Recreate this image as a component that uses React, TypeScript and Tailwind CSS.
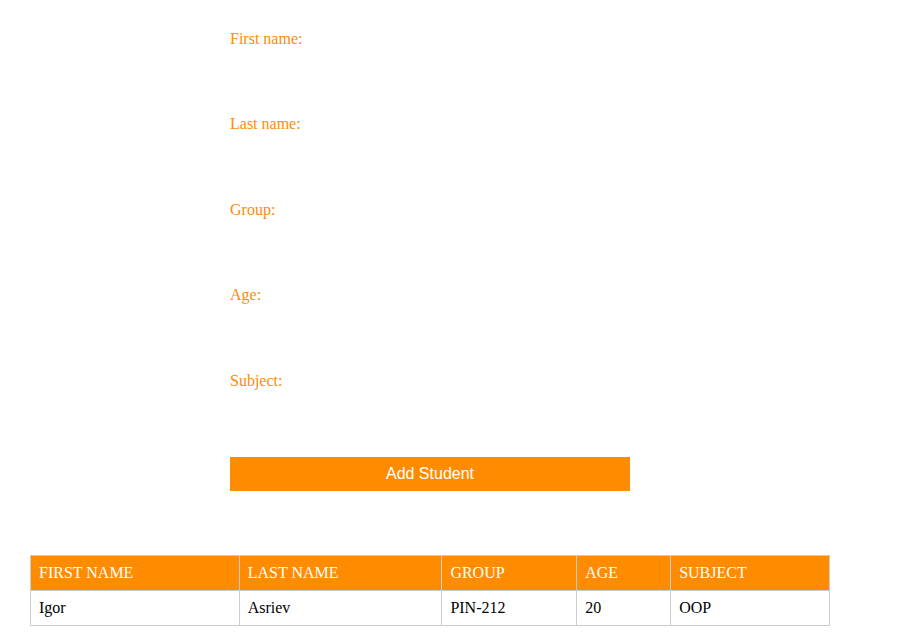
const fields = ["First name:", "Last name:", "Group:", "Age:", "Subject:"];

const columns = [
  { title: "FIRST NAME", width: "w-[209px]" },
  { title: "LAST NAME", width: "w-[203px]" },
  { title: "GROUP", width: "w-[135px]" },
  { title: "AGE", width: "w-[94px]" },
  { title: "SUBJECT", width: "w-[159px]" },
];

const students = [
  { firstName: "Igor", lastName: "Asriev", group: "PIN-212", age: "20", subject: "OOP" },
];

export default function App() {
  return (
    <div className="min-h-[644px] bg-white font-['Liberation_Serif',serif] text-[16px]">
      <form className="ml-[230px] w-[400px] pt-[30px]" onSubmit={(e) => e.preventDefault()}>
        {fields.map((label) => (
          <div key={label} className="h-[85.4px]">
            <label className="block leading-[18px] text-[#ff8c00]">{label}</label>
            <input type="text" className="mt-2 block h-[30px] w-full border-0 bg-transparent outline-none" />
          </div>
        ))}
        <button
          type="submit"
          className="block h-[34px] w-[400px] bg-[#ff8c00] font-['Liberation_Sans',sans-serif] text-[16px] text-white"
        >
          Add Student
        </button>
      </form>

      <table className="mt-[64px] ml-[30px] w-[800px] border-collapse">
        <thead>
          <tr className="bg-[#ff8c00] text-white">
            {columns.map((col) => (
              <th
                key={col.title}
                className={`${col.width} h-[35px] border border-[#cccccc] px-2 text-left font-normal leading-[18px]`}
              >
                {col.title}
              </th>
            ))}
          </tr>
        </thead>
        <tbody>
          {students.map((s, i) => (
            <tr key={i} className="text-black">
              <td className="h-[35px] border border-[#cccccc] px-2 leading-[18px]">{s.firstName}</td>
              <td className="h-[35px] border border-[#cccccc] px-2 leading-[18px]">{s.lastName}</td>
              <td className="h-[35px] border border-[#cccccc] px-2 leading-[18px]">{s.group}</td>
              <td className="h-[35px] border border-[#cccccc] px-2 leading-[18px]">{s.age}</td>
              <td className="h-[35px] border border-[#cccccc] px-2 leading-[18px]">{s.subject}</td>
            </tr>
          ))}
        </tbody>
      </table>
    </div>
  );
}
